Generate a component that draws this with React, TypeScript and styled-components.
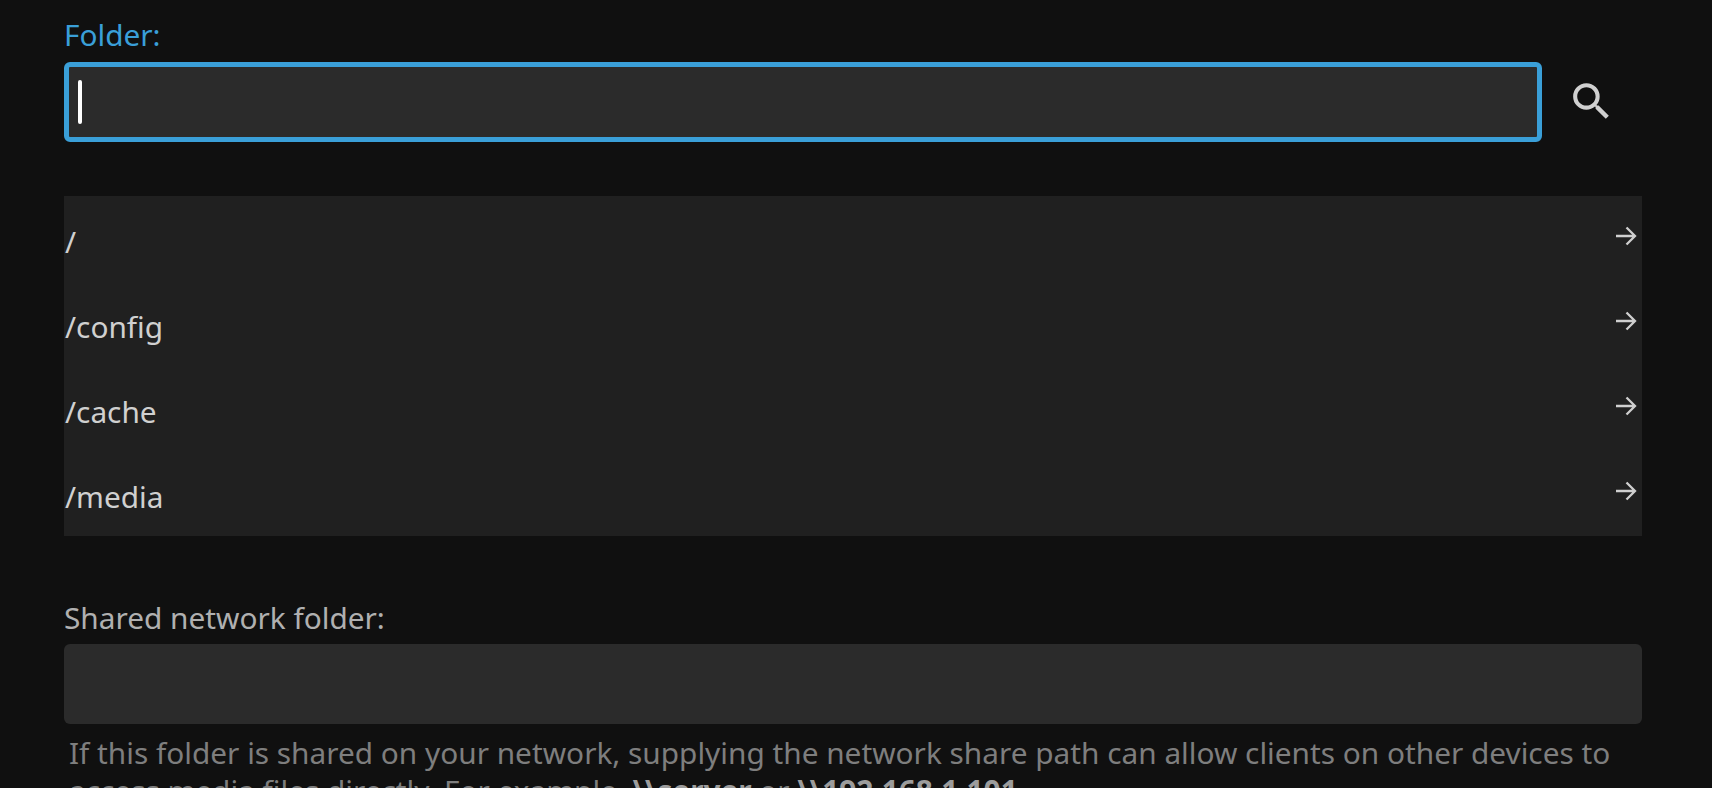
import React from "react";
import styled, { createGlobalStyle } from "styled-components";

const GlobalStyle = createGlobalStyle`
  html, body {
    margin: 0;
    height: 100%;
    overflow: hidden;
    background: #101010;
    color: #d0d0d0;
    font-family: "Noto Sans", sans-serif;
  }
`;

const Page = styled.div`
  height: 788px;
  overflow: hidden;
  padding: 0 70px 0 64px;
  box-sizing: border-box;
`;

const FolderLabel = styled.label`
  display: block;
  height: 62px;
  line-height: 70px;
  font-size: 29.8px;
  color: #3a9fd8;
`;

const SearchRow = styled.div`
  display: flex;
  align-items: center;
  margin-bottom: 54px;
`;

const FolderInput = styled.div`
  flex: 1;
  height: 80px;
  box-sizing: border-box;
  display: flex;
  align-items: center;
  padding-left: 9px;
  background: #2b2b2b;
  border: 5px solid #3a9fd8;
  border-radius: 6px;
`;

const Caret = styled.span`
  width: 4px;
  height: 44px;
  border-radius: 2px;
  background: #fff;
`;

const SearchButton = styled.button`
  width: 100px;
  height: 80px;
  padding: 0 2px 2px 0;
  border: none;
  background: none;
  color: #d0d0d0;
  display: flex;
  align-items: center;
  justify-content: center;
`;

const FolderList = styled.div`
  background: #202020;
  margin-bottom: 64px;
`;

const FolderRow = styled.div`
  height: 85px;
  display: flex;
  justify-content: space-between;
  padding-left: 1px;
  font-size: 29.8px;
  line-height: 92px;
  color: #d0d0d0;
`;

const RowArrow = styled.svg`
  width: 24px;
  height: 24px;
  margin: 28px 4px 0 0;
  fill: none;
  stroke: #cfcfcf;
  stroke-width: 2.3;
`;

const SharedLabel = styled.label`
  display: block;
  height: 44px;
  font-size: 29.8px;
  line-height: 36px;
  color: #b0b0b0;
`;

const SharedInput = styled.div`
  height: 80px;
  background: #2b2b2b;
  border-radius: 6px;
`;

const HelpText = styled.div`
  margin-top: 10px;
  padding-left: 5px;
  font-size: 29.8px;
  line-height: 38px;
  color: #7e7e7e;

  b {
    color: #9c9c9c;
  }
`;

const folders = ["/", "/config", "/cache", "/media"];

const App = () => {
  return (
    <Page>
      <GlobalStyle />
      <FolderLabel>Folder:</FolderLabel>
      <SearchRow>
        <FolderInput>
          <Caret />
        </FolderInput>
        <SearchButton aria-label="Search">
          <svg width="49" height="49" viewBox="0 0 24 24" fill="currentColor">
            <path d="M15.5 14h-.79l-.28-.27A6.47 6.47 0 0 0 16 9.5 6.5 6.5 0 1 0 9.5 16c1.61 0 3.09-.59 4.23-1.57l.27.28v.79l5 4.99L20.49 19l-4.99-5zm-6 0C7.01 14 5 11.99 5 9.5S7.01 5 9.5 5 14 7.01 14 9.5 11.99 14 9.5 14z" />
          </svg>
        </SearchButton>
      </SearchRow>
      <FolderList>
        {folders.map((folder) => (
          <FolderRow key={folder}>
            {folder}
            <RowArrow viewBox="0 0 24 24">
              <path d="M2 12h19M12.5 3.5l8.5 8.5-8.5 8.5" />
            </RowArrow>
          </FolderRow>
        ))}
      </FolderList>
      <SharedLabel>Shared network folder:</SharedLabel>
      <SharedInput />
      <HelpText>
        If this folder is shared on your network, supplying the network share path can allow clients on other devices to
        access media files directly. For example, <b>\\server</b> or <b>\\192.168.1.101</b>
      </HelpText>
    </Page>
  );
};

export default App;
